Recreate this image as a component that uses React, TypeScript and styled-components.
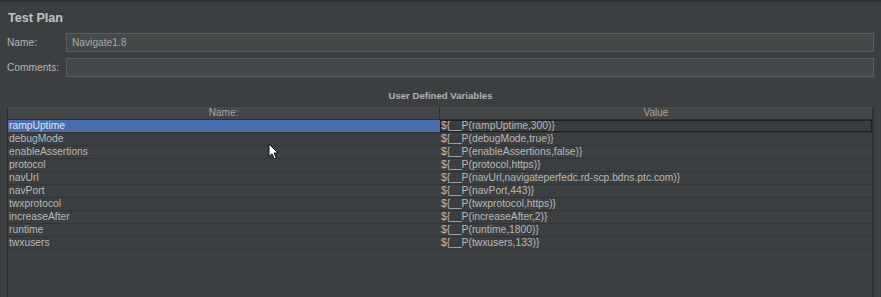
import styled, { createGlobalStyle } from "styled-components";

const GlobalStyle = createGlobalStyle`
    html, body {
        margin: 0;
        padding: 0;
        background-color: #3c3f41;
    }
    * {
        box-sizing: border-box;
    }
`

const Page = styled.div`
    position: relative;
    display: flex;
    flex-direction: column;
    width: 881px;
    height: 297px;
    overflow: hidden;
    background-color: #3c3f41;
    border-top: 2px solid #313335;
    font-family: "Liberation Sans", Arial, sans-serif;
    color: #bbbbbb;
`

const Title = styled.h1`
    margin: 8px 0 0 8px;
    height: 16px;
    line-height: 16px;
    font-size: 12.6px;
    font-weight: bold;
    color: #c2c2c2;
`

const FieldRow = styled.div<{ $top: number }>`
    display: grid;
    grid-template-columns: 59px 1fr;
    align-items: center;
    margin: ${(p) => p.$top}px 7px 0 7px;

    label {
        font-size: 10.2px;
        color: #b5b5b5;
    }
`

const TextField = styled.div`
    height: 19px;
    padding: 0 5px;
    line-height: 17px;
    font-size: 10.2px;
    color: #a8a8a8;
    background-color: #45494a;
    border: 1px solid #5b5e60;
`

const SectionTitle = styled.div`
    height: 30px;
    padding-top: 13px;
    line-height: 12px;
    text-align: center;
    font-size: 9.6px;
    font-weight: bold;
    color: #b0b0b0;
`

const TablePane = styled.div`
    flex: 1;
    margin: 0 7px;
    border-left: 1px solid #2b2d2e;
    border-right: 2px solid #2f3133;
    background-color: #3c3f41;
`

const Row = styled.div<{ $header?: boolean; $selected?: boolean }>`
    display: grid;
    grid-template-columns: 1fr 1fr;
    height: 13px;
    border-bottom: 1px solid ${(p) => (p.$header ? "#2c2e2f" : "#323435")};
    background: ${(p) =>
        p.$header ? "linear-gradient(#47494b, #424446)" : "#3c3f41"};
    font-size: ${(p) => (p.$header ? "10px" : "10.3px")};
`

const Cell = styled.div<{ $header?: boolean; $selected?: boolean; $focused?: boolean }>`
    overflow: hidden;
    white-space: nowrap;
    line-height: 12px;
    padding-left: ${(p) => (p.$header ? "0" : "1px")};
    text-align: ${(p) => (p.$header ? "center" : "left")};
    color: ${(p) => (p.$header ? "#a5a5a5" : p.$selected ? "#dde3ef" : "#b8b8b8")};
    background-color: ${(p) =>
        p.$selected ? "#4b6eaf" : p.$focused ? "#3a3d3f" : "transparent"};
    border-right: ${(p) => (p.$header ? "1px solid #2c2e2f" : "none")};
    outline: ${(p) => (p.$focused ? "1px solid #1f2122" : "none")};
    outline-offset: -1px;

    &:last-child {
        border-right: none;
    }
`

const Cursor = styled.svg`
    position: absolute;
    left: 268px;
    top: 141px;
    width: 11px;
    height: 17px;
`

const variables: [string, string][] = [
    ["rampUptime", "${__P(rampUptime,300)}"],
    ["debugMode", "${__P(debugMode,true)}"],
    ["enableAssertions", "${__P(enableAssertions,false)}"],
    ["protocol", "${__P(protocol,https)}"],
    ["navUrl", "${__P(navUrl,navigateperfedc.rd-scp.bdns.ptc.com)}"],
    ["navPort", "${__P(navPort,443)}"],
    ["twxprotocol", "${__P(twxprotocol,https)}"],
    ["increaseAfter", "${__P(increaseAfter,2)}"],
    ["runtime", "${__P(runtime,1800)}"],
    ["twxusers", "${__P(twxusers,133)}"],
];

export default function App() {
    return (
        <>
            <GlobalStyle />
            <Page>
                <Title>Test Plan</Title>
                <FieldRow $top={7}>
                    <label>Name:</label>
                    <TextField>Navigate1.8</TextField>
                </FieldRow>
                <FieldRow $top={6}>
                    <label>Comments:</label>
                    <TextField />
                </FieldRow>
                <SectionTitle>User Defined Variables</SectionTitle>
                <TablePane>
                    <Row $header>
                        <Cell $header>Name:</Cell>
                        <Cell $header>Value</Cell>
                    </Row>
                    {variables.map(([name, value], i) => (
                        <Row key={name}>
                            <Cell $selected={i === 0}>{name}</Cell>
                            <Cell $focused={i === 0}>{value}</Cell>
                        </Row>
                    ))}
                </TablePane>
                <Cursor viewBox="0 0 11 17">
                    <path
                        d="M1 1 L1 13.5 L4 10.8 L6.2 15.8 L8.2 14.9 L6 10 L10 10 Z"
                        fill="#ffffff"
                        stroke="#111111"
                        strokeWidth="1"
                        strokeLinejoin="round"
                    />
                </Cursor>
            </Page>
        </>
    )
}
